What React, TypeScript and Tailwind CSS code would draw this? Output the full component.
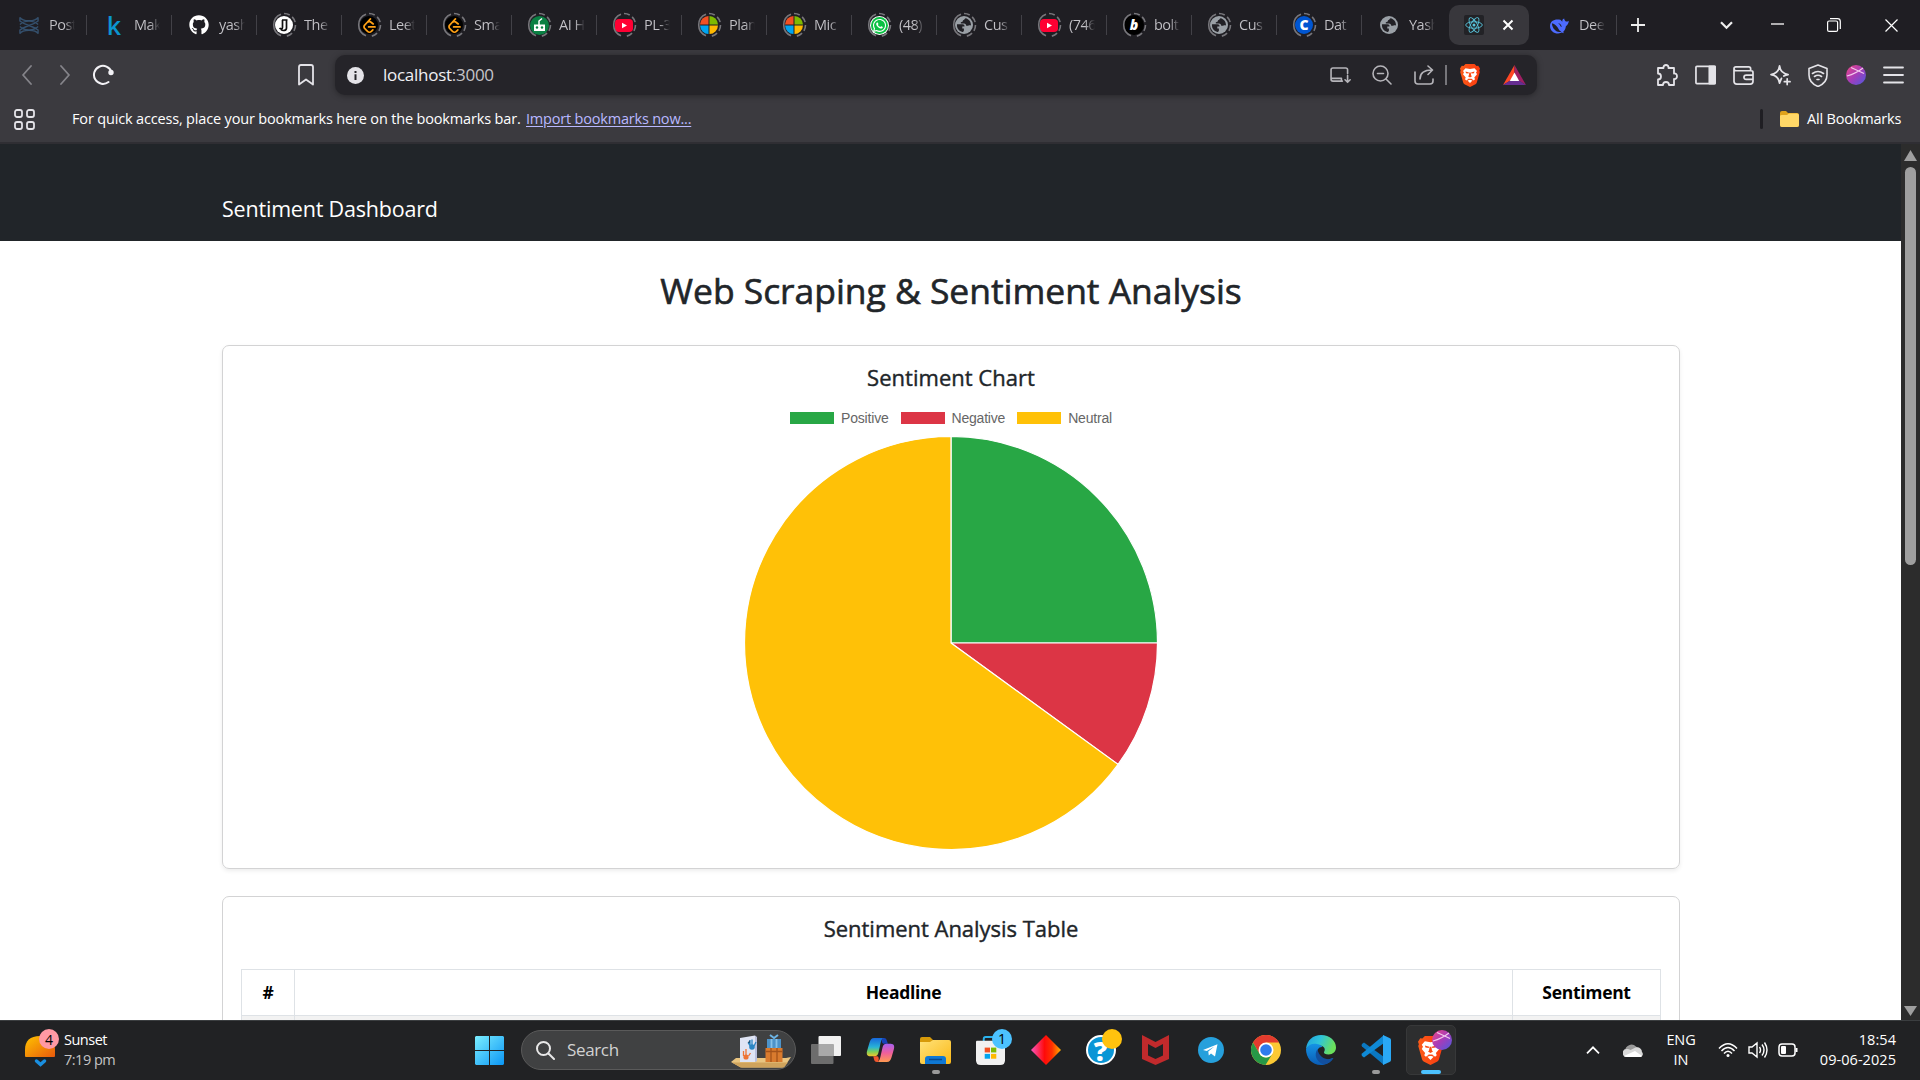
import React, { ReactNode } from "react";
import { FaGithub, FaWhatsapp, FaReact } from "react-icons/fa";
import { SiLeetcode } from "react-icons/si";

type Fav = { icon: ReactNode; label: string; ring?: boolean; noSep?: boolean };

const YouTube = () => (
  <svg width="18" height="13" viewBox="0 0 18 14" preserveAspectRatio="none"><rect width="18" height="14" rx="4" fill="#ff0033" /><path d="M7 4l5 3-5 3z" fill="#fff" /></svg>
);
const Microsoft = () => (
  <svg width="18" height="18" viewBox="0 0 18 18">
    <path d="M8.5 0A9 9 0 0 0 0 8.5h8.5z" fill="#f25022" /><path d="M9.5 0A9 9 0 0 1 18 8.5H9.5z" fill="#7fba00" />
    <path d="M0 9.5A9 9 0 0 0 8.5 18V9.5z" fill="#00a4ef" /><path d="M18 9.5A9 9 0 0 1 9.500 18V9.5z" fill="#ffb900" />
  </svg>
);
const Globe = () => (
  <svg width="18" height="18" viewBox="0 0 18 18">
    <circle cx="9" cy="9" r="9" fill="#9aa0a6" />
    <path d="M2 8.300h5.500c1.600 0 2 .9 2 2.200H7.300v2h1.600v2.200c-.8 1-.6 1.500-1.400 1.300C4 15.300 1.500 12 2 8.300z" fill="#222126" />
    <path d="M10.500 2.200C9.500 3 9.300 4 8 4.200c0 1.500-1 1.800-2.200 2v1.300H9c1.500 0 2.200 1 2.200 2.300h2c.8-.6 1.800-.5 2.800-.3.200-3.500-2-6.700-5.500-7.300z" fill="#222126" />
  </svg>
);
const Postfix = () => (
  <svg width="20" height="19" viewBox="0 0 22 20" fill="none" stroke="#34506d" strokeWidth="1.5">
    <path d="M1 1c3 5 17 5 20 0M1 19c3-5 17-5 20 0M1 1v4c6 5 14 5 20 10v4M21 1v4C15 10 7 10 1 15v4M1 9c5-5 15-5 20 0M1 11c5 5 15 5 20 0" />
  </svg>
);
const Leet = () => (
  <div className="flex size-[18px] items-center justify-center rounded-full bg-black"><SiLeetcode size={15} color="#ffa116" /></div>
);
const JJ = () => (
  <svg width="18" height="18" viewBox="0 0 18 18"><circle cx="9" cy="9" r="9" fill="#fff" /><path d="M7.500 4v7.500c0 1.500-2 1.800-3 .5M11.500 4v8c0 3-4 3-5.500 1.500M7 4h5.500" stroke="#111" strokeWidth="1.700" fill="none" /></svg>
);
const Robot = () => (
  <svg width="19" height="19" viewBox="0 0 19 19"><circle cx="9.500" cy="9.500" r="9.500" fill="#0a8043" /><path d="M4 8.500h11v6.500H4z" fill="#fff" /><path d="M9 9V5l3-2.500" fill="none" stroke="#fff" strokeWidth="1.500" /><circle cx="7" cy="11.500" r="1.200" fill="#0a8043" /><circle cx="12" cy="11.500" r="1.200" fill="#0a8043" /></svg>
);
const Whats = () => (
  <div className="flex size-[19px] items-center justify-center rounded-full bg-white"><div className="flex size-[17px] items-center justify-center rounded-full bg-[#0ac143]"><FaWhatsapp size={15} color="#fff" /></div></div>
);
const DeepSeek = () => (
  <svg width="20" height="17" viewBox="0 0 21 18">
    <path d="M12 3C7 1.500 1 3.500 1 9.500c0 5 4 8 8.500 8 2 0 3-.7 4-1l2 .7-.5-1.500c1.500-1.500 2.500-3.500 2.800-6 1.700-1 3-3 3-5.700-1 .8-2 1-3 .8-.8-1-1.800-1.500-1.800-3.300-2 .5-2 2-2 3.500z" fill="#4d6bfe" />
    <path d="M3 6.500c3 .5 6 3.500 7.500 7 .5 1 1.500 1.500 2.500 2-3 1-5 0-7-2C4.500 12 3 9.500 3 6.500zM9.500 6.500c2 0 3.500 1.500 4 4l-1.500-.8c0-1-1-2.200-2.500-3.200z" fill="#1f1e23" />
  </svg>
);

const tabs: Fav[] = [
  { icon: <Postfix />, label: "Postf" },
  { icon: <span className="font-['Open_Sans'] text-[25px] leading-none font-semibold text-[#0b95cf]">k</span>, label: "Mak" },
  { icon: <FaGithub size={20} color="#fff" />, label: "yash" },
  { icon: <JJ />, label: "The", ring: true },
  { icon: <Leet />, label: "Leet", ring: true },
  { icon: <Leet />, label: "Sma", ring: true },
  { icon: <Robot />, label: "AI H", ring: true },
  { icon: <YouTube />, label: "PL-3", ring: true },
  { icon: <Microsoft />, label: "Plan", ring: true },
  { icon: <Microsoft />, label: "Mic", ring: true },
  { icon: <Whats />, label: "(48)", ring: true },
  { icon: <Globe />, label: "Cus", ring: true },
  { icon: <YouTube />, label: "(746", ring: true },
  { icon: <span className="flex size-[20px] items-center justify-center rounded-full bg-black text-[14px] leading-none font-extrabold text-white italic">b</span>, label: "bolt", ring: true },
  { icon: <Globe />, label: "Cus", ring: true },
  { icon: <span className="flex size-[18px] items-center justify-center rounded-full bg-[#0056d2] text-[14px] leading-none font-extrabold text-white">C</span>, label: "Dat", ring: true },
  { icon: <Globe />, label: "Yash", noSep: true },
];

function Tab({ t }: { t: Fav }) {
  return (
    <div className="flex h-[50px] w-[85px] shrink-0 items-center">
      <div className="relative ml-[14px] flex size-[26px] shrink-0 items-center justify-center">
        {t.ring && (
          <svg className="absolute inset-0" width="26" height="26" viewBox="0 0 26 26" fill="none" stroke="#77767b" strokeWidth="1.600">
            <path d="M10 23.700A11.500 11.500 0 0 1 10 2.300" /><path d="M13 1.500A11.500 11.500 0 0 1 24.500 13A11.500 11.500 0 0 1 13 24.500" strokeDasharray="6 3" />
          </svg>
        )}
        {t.icon}
      </div>
      <div className="ml-[7px] w-[26px] shrink-0 overflow-hidden bg-gradient-to-r from-[#c4c3c8] from-60% to-[#c4c3c800] bg-clip-text text-[14.500px] leading-[22px] tracking-[-0.500px] whitespace-nowrap text-transparent">{t.label}</div>
      {!t.noSep && <div className="ml-[11px] h-5 w-px bg-[#424147]" />}
    </div>
  );
}

function Cell({ className, children }: { className: string; children: ReactNode }) {
  return <div className={"flex h-full shrink-0 items-center justify-center " + className}>{children}</div>;
}

const BraveLion = ({ w, h, id }: { w: number; h: number; id: string }) => (
  <svg width={w} height={h} viewBox="0 0 20 23" preserveAspectRatio="none">
    <defs><linearGradient id={id}><stop stopColor="#fb5b18" /><stop offset="1" stopColor="#fb3a10" /></linearGradient></defs>
    <path d="M5.500 0h9l2 2 1.700-.200L20 4.500l-.700 2 .500 1.500-3 10.500q-.300 1-1.300 1.800L10 23l-5.500-2.700q-1-.800-1.300-1.800L.2 8l.5-1.500-.7-2 1.800-2.700 1.700.2z" fill={"url(#" + id + ")"} />
    <path d="M5.500 4.200l4.500.800 4.500-.800L17 7l-1 1.500 1 1.800-2.700 3.200.700 1.700-1.300 1.300-2-1.500H8.300l-2 1.500L5 15.200l.7-1.700L3 10.300l1-1.800L3 7zM7.500 16.500L10 15.700l2.500.8L10 19z" fill="#fff" />
    <path d="M5.500 7.500l3.500 1-.500 1-2.500-.300zM14.500 7.500l-3.500 1 .5 1 2.500-.3zM9.300 8.500h1.400l.5 3 .8.800L10 13.500l-2-1.200.8-.8zM8 14.700h4L10 15.800z" fill="#fb4b14" />
  </svg>
);

const Planet = ({ size, id }: { size: number; id: string }) => (
  <svg width={size} height={size} viewBox="0 0 20 20">
    <defs><linearGradient id={id} x1="0" y1="0" x2="1" y2="1"><stop offset=".1" stopColor="#e0458f" /><stop offset=".5" stopColor="#a63cb9" /><stop offset="1" stopColor="#4a5be0" /></linearGradient></defs>
    <circle cx="10" cy="10" r="10" fill={"url(#" + id + ")"} /><path d="M1 11Q10 8.500 17 3M5 2.500l13 6" stroke="#f3c9ee" strokeWidth="1.100" fill="none" />
  </svg>
);

function TabStrip() {
  return (
    <div className="flex h-[50px] items-center bg-[#1f1e23] pl-[2px]">
      {tabs.map((t, i) => <Tab key={i} t={t} />)}
      <div className="ml-[2px] flex h-10 w-[80px] shrink-0 items-center rounded-[10px] bg-[#38373c]">
        <div className="ml-[15px] flex size-5 items-center justify-center rounded-[2px] bg-[#222226]">
          <svg width="18" height="18" viewBox="-10 -10 20 20" fill="none" stroke="#58c4dc" strokeWidth="1"><ellipse rx="9.200" ry="3.600" /><ellipse rx="9.200" ry="3.600" transform="rotate(60)" /><ellipse rx="9.200" ry="3.600" transform="rotate(120)" /><circle r="1.700" fill="#58c4dc" stroke="none" /></svg>
        </div>
        <svg className="ml-[18px]" width="12" height="12" viewBox="0 0 12 12" stroke="#fff" strokeWidth="2"><path d="M1.500 1.500l9 9M10.500 1.500l-9 9" /></svg>
      </div>
      <div className="ml-[3px]"><Tab t={{ icon: <DeepSeek />, label: "Dee" }} /></div>
      <svg className="ml-[14px]" width="14" height="14" viewBox="0 0 14 14" stroke="#eee" strokeWidth="1.800"><path d="M7 0v14M0 7h14" /></svg>
      <svg className="ml-[75px]" width="13" height="9" viewBox="0 0 13 9" fill="none" stroke="#eee" strokeWidth="2.200"><path d="M1 1.200l5.500 5.600L12 1.200" /></svg>
      <svg className="mb-[2px] ml-[38px]" width="13" height="2"><path d="M0 1h13" stroke="#fff" strokeWidth="1.300" /></svg>
      <svg className="ml-[43px]" width="14" height="14" viewBox="0 0 14 14" fill="none" stroke="#fff" strokeWidth="1.200"><rect x=".6" y="3" width="10" height="10.400" rx="1.500" /><path d="M3 .7h7.500q2.800 0 2.800 2.800V11" /></svg>
      <svg className="ml-[44px]" width="13" height="13" viewBox="0 0 13 13" stroke="#fff" strokeWidth="1.200"><path d="M.5.5l12 12M12.500.5l-12 12" /></svg>
    </div>
  );
}

const line = { fill: "none", stroke: "#e4e3e8", strokeWidth: 1.8, strokeLinecap: "round" as const, strokeLinejoin: "round" as const };

function Toolbar() {
  return (
    <div className="flex h-[50px] items-center">
      <Cell className="ml-[8px] w-[37px]"><svg width="12" height="20" viewBox="0 0 12 20" {...line} stroke="#85848a"><path d="M10 1L2 10l8 9" /></svg></Cell>
      <Cell className="w-[39px]"><svg width="12" height="20" viewBox="0 0 12 20" {...line} stroke="#85848a"><path d="M2 1l8 9-8 9" /></svg></Cell>
      <Cell className="w-[38px]"><svg width="22" height="22" viewBox="0 0 22 22" {...line} stroke="#f2f1f5" strokeWidth="2"><path d="M16.500 18A9 9 0 1 1 19.500 8" /><circle cx="19" cy="8.500" r="1.700" fill="#f2f1f5" /></svg></Cell>
      <Cell className="ml-[165px] w-[38px]"><svg width="16" height="22" viewBox="0 0 16 22" {...line}><path d="M1 3q0-2 2-2h10q2 0 2 2v17.500L8 15.500 1 20.500z" /></svg></Cell>
      <div className="ml-[10px] flex h-10 w-[1202px] items-center rounded-[10px] bg-[#252429] shadow-[0_1px_6px_rgba(0,0,0,0.35)]">
        <svg className="ml-[12px]" width="17" height="17" viewBox="0 0 17 17"><circle cx="8.500" cy="8.500" r="8.500" fill="#e4e3e8" /><path d="M7.500 4h2v2h-2zM7.500 7.200h2V13h-2z" fill="#252429" /></svg>
        <span className="ml-[19px] text-[17px] tracking-[-0.270px] text-[#f0f0f4]">localhost<span className="text-[#c6c5ca]">:3000</span></span>
        <div className="ml-auto flex h-full items-center pr-[2px]">
          <Cell className="w-[42px] pl-[2px]"><svg width="21" height="17" viewBox="0 0 22 18" {...line} stroke="#b5b4b9" strokeWidth="1.700"><path d="M18.500 7V3q0-2-2-2H3Q1 1 1 3v10q0 2 2 2h10M1 12h11v3M18.500 9v7M15.800 13.500l2.700 2.700 2.700-2.700" /></svg></Cell>
          <Cell className="w-[43px]"><svg width="20" height="20" viewBox="0 0 20 20" {...line} stroke="#b5b4b9" strokeWidth="1.600"><circle cx="8.500" cy="8.500" r="7.500" /><path d="M14 14l5 5M5.500 8.500h6" /></svg></Cell>
          <Cell className="w-[42px]"><svg width="20" height="20" viewBox="0 0 20 20" {...line} stroke="#b5b4b9" strokeWidth="1.600"><path d="M1 7v9q0 3 3 3h12q3 0 3-3v-2M6 14q0-9 12-9M14 1l4.500 4L14 9.500" /></svg></Cell>
          <div className="h-5 w-[2px] bg-[#77767b]" />
          <Cell className="w-[46px]"><BraveLion w={20} h={23} id="bl1" /></Cell>
          <Cell className="w-[42px]"><svg width="23" height="20" viewBox="0 0 23 20"><path d="M11.500 0L0 20l11.500-7z" fill="#ff4724" /><path d="M11.500 0L23 20 11.500 13z" fill="#9e1f63" /><path d="M0 20h23l-7-4.500H7z" fill="#662d91" /><path d="M11.500 7.500l4.700 8.500h-9.400z" fill="#fff" /></svg></Cell>
        </div>
      </div>
      <div className="ml-[112px] flex h-full items-center">
        <Cell className="w-[37px]"><svg width="21" height="22" viewBox="0 0 21 22" {...line}><path d="M1 4h5.500C6 0 12 0 11.500 4H17v5.500c4-.5 4 6 0 5.500V21h-5c0-4-6-4-6 0H1v-5.500c4 0 4-6 0-6z" /></svg></Cell>
        <Cell className="w-[38px]"><svg width="21" height="20" viewBox="0 0 22 20" {...line}><rect x="1" y="1" width="20" height="18" rx="1" /><path d="M15 1h6v18h-6z" fill="#e4e3e8" /></svg></Cell>
        <Cell className="w-[38px]"><svg width="21" height="19" viewBox="0 0 22 20" {...line}><path d="M1 3v13q0 3 3 3h14q3 0 3-3V7q0-2-2-2H3Q1 5 1 3q0-2 2-2h13.500q2 0 2 2v2M21 9.500h-7q-2.500 0-2.500 2.300T14 14h7" /></svg></Cell>
        <Cell className="w-[37px]"><svg width="21" height="21" viewBox="0 0 22 22" {...line}><path d="M12 14q-1 2.500-2 5-1-8-9-9 8-1 9-9 1 8 9 9-2.500.3-4.500 1.500M18 14.500v6M15 17.500h6" /></svg></Cell>
        <Cell className="w-[38px]"><svg width="20" height="23" viewBox="0 0 20 23" {...line} strokeWidth="1.600"><path d="M10 1l9 3.500V11c0 6-4 9.500-9 11.500C5 20.500 1 17 1 11V4.500zM4.500 9.500q5.500-4 11 0M6.500 12.500q3.500-2.500 7 0M9 15.500h2" /></svg></Cell>
        <Cell className="w-[37px]"><Planet size={20} id="av" /></Cell>
        <Cell className="w-[38px]"><svg width="21" height="18" viewBox="0 0 21 18" {...line}><path d="M1 1.500h19M1 9h19M1 16.500h19" /></svg></Cell>
      </div>
    </div>
  );
}

function Bookmarks() {
  return (
    <div className="flex h-[42px] items-center pb-[4px] text-[15px] text-white">
      <svg className="ml-[14px] shrink-0" width="21" height="21" viewBox="0 0 21 21" {...line}><rect x="1" y="1" width="7" height="7" rx="2" /><rect x="13" y="1" width="7" height="7" rx="2" /><rect x="1" y="13" width="7" height="7" rx="2" /><rect x="13" y="13" width="7" height="7" rx="2" /></svg>
      <span className="ml-[37px] w-[454px] text-[14.500px] tracking-[-0.165px] whitespace-nowrap">For quick access, place your bookmarks here on the bookmarks bar.</span>
      <span className="text-[14.500px] tracking-[-0.200px] whitespace-nowrap text-[#b9b8ff] underline underline-offset-2">Import bookmarks now...</span>
      <div className="ml-auto h-5 w-[3px] rounded bg-[#1f1e23]" />
      <svg className="ml-[17px]" width="19" height="16" viewBox="0 0 19 16"><path d="M0 2q0-2 2-2h4l2 2h9q2 0 2 2v10q0 2-2 2H2q-2 0-2-2z" fill="#e0a21b" /><path d="M0 5q0-1 2-1h5l2-1.500h8q2 0 2 2V14q0 2-2 2H2q-2 0-2-2z" fill="#ffd767" /></svg>
      <span className="ml-[8px] w-[113px] text-[14.500px] tracking-[-0.180px] whitespace-nowrap">All Bookmarks</span>
    </div>
  );
}

function Legend({ color, label }: { color: string; label: string }) {
  return (
    <div className="flex items-center gap-[7px]">
      <span className="h-[12px] w-[44px]" style={{ backgroundColor: color }} />
      <span className="font-['Liberation_Sans'] text-[14px] leading-4 tracking-[-0.200px] text-[#666]">{label}</span>
    </div>
  );
}

function Page() {
  return (
    <div className="flex h-[876px] overflow-hidden">
      <main className="h-full w-[1901px] shrink-0 overflow-hidden bg-white text-[#212529]">
        <nav className="h-[97px] bg-[#212529] pt-[48px] pl-[222px]"><span className="text-[21.500px] leading-[34px] tracking-[-0.200px] text-white">Sentiment Dashboard</span></nav>
        <div className="ml-[222px] w-[1458px]">
          <h1 className="pt-[28px] text-center text-[35.500px] leading-[43px] font-medium tracking-[-0.050px] [-webkit-text-stroke:0.6px_#212529]">Web Scraping &amp; Sentiment Analysis</h1>
          <section className="mt-[33px] flex h-[524px] flex-col items-center rounded-[7px] border border-[#d3d3d4] shadow-[0_2px_4px_rgba(0,0,0,0.075)]">
            <h2 className="mt-[18px] text-[22px] leading-[27px] font-medium tracking-[0.020px] [-webkit-text-stroke:0.4px_#212529]">Sentiment Chart</h2>
            <div className="mt-[19px] flex h-4 items-center gap-[12px]">
              <Legend color="#28a745" label="Positive" /><Legend color="#dc3545" label="Negative" /><Legend color="#ffc107" label="Neutral" />
            </div>
            <svg className="mt-[10px]" width="414" height="414" viewBox="-207 -207 414 414" stroke="#fff" strokeWidth="1.200" strokeLinejoin="bevel">
              <path d="M0 0V-206.500A206.500 206.500 0 0 1 206.500 0z" fill="#28a745" />
              <path d="M0 0H206.500A206.500 206.500 0 0 1 167.060 121.380z" fill="#dc3545" />
              <path d="M0 0L167.060 121.380A206.500 206.500 0 1 1 0-206.500z" fill="#ffc107" />
            </svg>
          </section>
          <section className="mt-[27px] h-[200px] rounded-[7px] border border-[#d3d3d4] px-[18px] pt-[18px]">
            <h2 className="text-center text-[22px] leading-[27px] font-medium tracking-[-0.030px] [-webkit-text-stroke:0.4px_#212529]">Sentiment Analysis Table</h2>
            <div className="mt-[27px] grid grid-cols-[52px_1fr_147px] gap-px bg-[#dee2e6] p-px text-center text-[17.500px] font-bold tracking-[-0.300px] text-black">
              <div className="bg-white leading-[45px]">#</div><div className="bg-white leading-[45px]">Headline</div><div className="bg-white leading-[45px]">Sentiment</div>
              <div className="h-[45px] bg-[#f2f2f2]" /><div className="bg-[#f2f2f2]" /><div className="bg-[#f2f2f2]" />
            </div>
          </section>
        </div>
      </main>
      <aside className="flex w-[19px] flex-col items-center bg-[#2c2c2c]">
        <svg className="mt-[6px]" width="13" height="11"><path d="M6.500 0L13 11H0z" fill="#9f9f9f" /></svg>
        <div className="mt-[6px] h-[398px] w-[11px] rounded-full bg-[#9f9f9f]" />
        <svg className="mt-auto mb-[4px]" width="13" height="10"><path d="M6.500 10L13 0H0z" fill="#9f9f9f" /></svg>
      </aside>
    </div>
  );
}

const Copilot = () => (
  <svg width="29" height="26" viewBox="0 0 29 27" fill="none">
    <defs>
      <linearGradient id="ca" x1="0" y1="0" x2="0" y2="1"><stop stopColor="#1767dd" /><stop offset=".5" stopColor="#28b3d7" /><stop offset=".75" stopColor="#7bd05a" /><stop offset="1" stopColor="#f5c52b" /></linearGradient>
      <linearGradient id="cb" x1="0" y1="0" x2="0" y2="1"><stop stopColor="#a760f0" /><stop offset=".5" stopColor="#ef5f9c" /><stop offset="1" stopColor="#ff9a50" /></linearGradient>
    </defs>
    <path d="M17 1h1c2.500 0 3 2 3.500 4l.7 2h-4C16 7 15 4 17 1z" fill="#1742b8" />
    <path d="M8 1h10c-2.500 0-3.300 5-4 8l-1.800 8c-.7 2-1.700 3-4 3H4c-4 0-4.200-3-3.300-6L3 6C4 3 5 1 8 1z" fill="url(#ca)" />
    <path d="M21 26H11c2.500 0 3.300-5 4-8l1.800-8c.7-2 1.700-3 4-3H25c4 0 4.200 3 3.300 6L26 21c-1 3-2 5-5 5z" fill="url(#cb)" />
    <path d="M12 26h-1c-2.500 0-3-2-3.500-4L7 20h3.500c2 0 3 2 1.500 6z" fill="#f0562e" />
  </svg>
);
const Explorer = () => (
  <svg width="31" height="27" viewBox="0 0 31 27"><defs><linearGradient id="fo" x1="0" y1="0" x2="1" y2="1"><stop stopColor="#ffe27a" /><stop offset="1" stopColor="#fbb917" /></linearGradient></defs><path d="M0 2q0-2 2-2h8l4 4v4H0z" fill="#d79a0a" /><path d="M0 5h10l3-2h16q2 0 2 2v20q0 2-2 2H2q-2 0-2-2z" fill="url(#fo)" /><path d="M5 27v-5q0-3 3-3h15q3 0 3 3v5z" fill="#0f78d4" /><path d="M9 22.500h13" stroke="#08498f" strokeWidth="1.500" /></svg>
);
const Store = () => (
  <div className="relative">
    <svg width="29" height="29" viewBox="0 0 30 30"><path d="M8 8V3q0-2 2-2h9q3 0 3 2v5" fill="none" stroke="#2bb3ee" strokeWidth="2" /><path d="M0 6q0-1 1-1h28q1 0 1 1v19q0 5-5 5H5q-5 0-5-5z" fill="#f1f1f1" /><path d="M9 12h5.500v5H9z" fill="#f25022" /><path d="M15.500 12H21v5h-5.500z" fill="#7fba00" /><path d="M9 18.500h5.500v5H9z" fill="#00a4ef" /><path d="M15.500 18.500H21v5h-5.500z" fill="#ffb900" /></svg>
    <span className="absolute -top-[7px] left-[16px] flex size-5 items-center justify-center rounded-full bg-[#4cc2ff] text-[14px] text-black">1</span>
  </div>
);
const Diamond = () => (
  <svg width="30" height="30" viewBox="0 0 30 30"><defs><linearGradient id="di"><stop stopColor="#f857c0" /><stop offset=".45" stopColor="#ff0a0a" /><stop offset=".7" stopColor="#ff3000" /><stop offset="1" stopColor="#ffb000" /></linearGradient></defs><path d="M15 0l15 15-15 15L0 15z" fill="url(#di)" /></svg>
);
const Help = () => (
  <div className="relative flex size-[30px] items-center justify-center rounded-full border-2 border-white bg-[#0a96d6] text-[27px] leading-none font-extrabold text-white">?<span className="absolute -top-[8px] left-[14px] size-5 rounded-full bg-[#ffc20e]" /></div>
);
const McAfee = () => (
  <svg width="27" height="30" viewBox="0 0 27 30"><path d="M0 0l13.500 7L27 0v24l-13.500 6L0 24z" fill="#c12a2c" /><path d="M6 9l7.500 4L21 9v11.500L13.500 24 6 20.500z" fill="#212224" /></svg>
);
const Telegram = () => (
  <svg width="26" height="26" viewBox="0 0 26 26"><circle cx="13" cy="13" r="13" fill="#26a0dc" /><path d="M5 13l14.500-5.700L17 19.500l-4-3-2.200 2-.5-4 6-5-7.500 4.500z" fill="#fff" /></svg>
);
const Chrome = () => (
  <svg width="30" height="30" viewBox="0 0 30 30"><circle cx="15" cy="15" r="15" fill="#fcc934" /><path d="M2 7.500A15 15 0 0 1 28 7.500H15L8.500 18.700z" fill="#e33b2e" /><path d="M2 7.500A15 15 0 0 0 14.500 30L21.500 18.700A7.500 7.500 0 0 1 8.500 18.700z" fill="#279847" /><circle cx="15" cy="15" r="7.500" fill="#fff" /><circle cx="15" cy="15" r="5.800" fill="#2f7bee" /></svg>
);
const Edge = () => (
  <svg width="30" height="30" viewBox="0 0 30 30"><defs><linearGradient id="ea" y1="0" x2="1" y2=".3"><stop stopColor="#1f9fe0" /><stop offset=".5" stopColor="#2fc4d9" /><stop offset="1" stopColor="#6be05c" /></linearGradient><linearGradient id="eb" x2="0" y2="1"><stop stopColor="#1593e5" /><stop offset="1" stopColor="#0a5cb5" /></linearGradient></defs>
    <path d="M0 14C1 5 7 0 15 0c9 0 15 6 15 12.500 0 4-3 7-7.500 7-3 0-5-1-4.500-2.500 2-3 0-6-4-6.500C8 9.500 2 11 0 14z" fill="url(#ea)" /><path d="M0 14c2-4.500 7-6 11-5 3 .5 5 2 5.500 3-4-.5-5.500 3-5 6 .8 5 6 7.500 11 6.500 2-.5 3.500-1.500 4.800-1.500C24.500 27.500 20 30 15 30 6 30 0 23 0 14z" fill="url(#eb)" /><path d="M11.500 14c-4 6-1 13 6 15.500 4-.5 8-3 10-6.500-6 3.500-15-.5-16-9z" fill="#124f9e" /></svg>
);
const VSCode = () => (
  <svg width="30" height="30" viewBox="0 0 30 30"><path d="M1 9l2-1.500L23 22v8L1 11.500Q0 10.200 1 9z" fill="#0b78c1" /><path d="M1 21l2 1.500L23 8V0L1 18.500Q0 19.800 1 21z" fill="#0f8ad6" /><path d="M22 0l6.500 3Q30 3.700 30 5v20q0 1.300-1.500 2L22 30z" fill="#2aa8f5" /></svg>
);
const BraveApp = () => (
  <div className="relative flex size-[50px] items-center justify-center rounded-[5px] border border-[#373839] bg-[#2d2e2f]"><BraveLion w={25} h={29} id="bl2" /><span className="absolute top-[4px] left-[25px]"><Planet size={20} id="av2" /></span></div>
);

const apps: { el: ReactNode; mark?: "dot" | "bar" }[] = [
  { el: <svg width="30" height="28" viewBox="0 0 30 28"><rect x="7.500" y="0" width="22.500" height="20" rx="1" fill="#f1f1f1" /><rect x="0" y="8" width="22.500" height="20" rx="1" fill="#6d6d6d" /><path d="M7.500 8h15v12h-15z" fill="#a9a9a9" /></svg> },
  { el: <Copilot /> }, { el: <Explorer />, mark: "dot" }, { el: <Store /> }, { el: <Diamond /> }, { el: <Help /> }, { el: <McAfee /> },
  { el: <Telegram /> }, { el: <Chrome /> }, { el: <Edge /> }, { el: <VSCode />, mark: "dot" }, { el: <BraveApp />, mark: "bar" },
];

function Taskbar() {
  return (
    <footer className="flex h-[60px] items-center border-t border-[#3b3e40] bg-[#212224] pb-px text-white">
      <div className="relative ml-[25px] size-[36px] shrink-0">
        <svg width="32" height="38" viewBox="0 0 32 38"><defs><linearGradient id="su" x2="1" y2="1"><stop stopColor="#ffc400" /><stop offset="1" stopColor="#e8590c" /></linearGradient></defs><path d="M0 24V18q0-14 15-14t15 14v6q0 1-1 1H1q-1 0-1-1z" fill="url(#su)" /><path d="M11.500 29l4 3.500 4-3.500" fill="none" stroke="#1a8fe0" strokeWidth="3.500" strokeLinecap="round" /></svg>
        <span className="absolute -top-[3px] left-[14px] flex size-5 items-center justify-center rounded-full bg-[#ff99a4] text-[14px] text-black">4</span>
      </div>
      <div className="ml-[3px] w-[410px] text-[14.500px] leading-5 tracking-[-0.500px]"><div>Sunset</div><div className="text-[#c4c4c4]">7:19 pm</div></div>
      <svg className="ml-px" width="29" height="29" viewBox="0 0 29 29"><defs><linearGradient id="wi" x2="1" y2="1"><stop stopColor="#7beeff" /><stop offset="1" stopColor="#0b96f5" /></linearGradient></defs><path d="M1 0h13v14H0V1zM15 0h13l1 1v13H15zM0 15h14v14H1l-1-1zM15 15h14v13l-1 1H15z" fill="url(#wi)" /></svg>
      <div className="ml-[17px] flex h-10 w-[275px] items-center rounded-full border border-[#5a5a5a] bg-[#404142]">
        <svg className="ml-[14px]" width="19" height="19" viewBox="0 0 19 19" fill="none" stroke="#e8e8e8" strokeWidth="2"><circle cx="7.500" cy="7.500" r="6.500" /><path d="M12.500 12.500l5.500 5.500" strokeLinecap="round" /></svg>
        <span className="ml-[12px] text-[17px] tracking-[-0.350px] text-[#d2d2d2]">Search</span>
        <svg className="mt-[2px] mr-[4px] ml-auto" width="60" height="34" viewBox="0 0 60 34">
          <path d="M0 28l5-4h50l5-1-6 9q-1 1.500-3 1.500H11q-2 0-3-1z" fill="#e9c581" /><path d="M1 28.500h56l-3 3.500q-1 1.500-3 1.500H11q-2 0-3-1z" fill="#cfa35c" /><path d="M9 4l15-2.500V28H9z" fill="#dfe4f4" /><path d="M24 1.500l2 1.500v24l-2 1z" fill="#b9bfdc" />
          <path d="M17 8.500l2 3V6M21 11V5.500M23 12l2-4" stroke="#2c86c4" strokeWidth="1.300" /><circle cx="21" cy="13" r="2.800" fill="#2c86c4" /><path d="M12.500 17v5M15 21v-6M17.500 22l2-3" stroke="#ee7335" strokeWidth="1.300" /><circle cx="15" cy="23" r="2.600" fill="#ee7335" />
          <path d="M36 5h14v10H36z" fill="#4d93c9" /><path d="M40.500 5v10M45.500 5v10" stroke="#86c1e8" strokeWidth="1.800" /><path d="M39 1l4 3 4-3" stroke="#6cb5e6" strokeWidth="2" fill="none" /><path d="M34.500 14h17v14h-17z" fill="#d97b2e" /><path d="M40 14v14M46 14v14M34.500 17.500h17" stroke="#a4531a" strokeWidth="1.300" />
        </svg>
      </div>
      <div className="ml-[2px] flex h-full">
        {apps.map((a, i) => (
          <div key={i} className="relative flex h-full w-[55px] items-center justify-center">
            {a.el}
            {a.mark === "dot" && <span className="absolute bottom-[5px] h-1 w-2 rounded-full bg-[#9a9a9a]" />}
            {a.mark === "bar" && <span className="absolute bottom-[5px] h-1 w-5 rounded-full bg-[#4cc2ff]" />}
          </div>
        ))}
      </div>
      <div className="ml-auto flex items-center pr-[24px] text-[15px] leading-5">
        <svg width="14" height="8" viewBox="0 0 14 8" fill="none" stroke="#fff" strokeWidth="1.700"><path d="M1 7.300l6-6 6 6" /></svg>
        <svg className="ml-[23px]" width="20" height="13" viewBox="0 0 20 13"><path d="M2 7A6.500 6.500 0 0 1 13 2.500L19 7 9 10z" fill="#9a9a9a" /><path d="M4 13a4 4 0 0 1-.5-8q2-.5 4 1l5-2.500q5.500-1 6.500 4.500a3 3 0 0 1-1.500 5z" fill="#d9d9d9" /><path d="M1 12l11-5 7 5q-.5 1-2 1H4q-2 0-3-1z" fill="#fff" /></svg>
        <div className="ml-[22px] w-[32px] text-center text-[14.500px] tracking-[-0.100px]">ENG<br />IN</div>
        <svg className="ml-[21px]" width="20" height="16" viewBox="0 0 20 16" fill="none" stroke="#fff" strokeWidth="1.500"><path d="M1 6.500q9-9.500 18 0M3.500 9q6.500-7 13 0M6 11.500q4-4.500 8 0" /><circle cx="10" cy="13.500" r="1.500" fill="#fff" stroke="none" /></svg>
        <svg className="ml-[10px]" width="20" height="18" viewBox="0 0 20 18" fill="none" stroke="#fff" strokeWidth="1.400"><path d="M1 6h3l5-4v14l-5-4H1zM11.500 6q2 3 0 6M14 3.500q4 5.500 0 11M16.500 1.500q5 7.500 0 15" /></svg>
        <svg className="ml-[10px]" width="20" height="14" viewBox="0 0 20 14" fill="none" stroke="#fff" strokeWidth="1.500"><rect x="1" y="1" width="16" height="12" rx="3" /><path d="M18.500 5v4" strokeWidth="2" /><rect x="3" y="3" width="5" height="8" rx="1" fill="#fff" stroke="none" /></svg>
        <div className="ml-[20px] w-[78px] text-right text-[14.500px] tracking-[0.050px] whitespace-nowrap">18:54<br />09-06-2025</div>
      </div>
    </footer>
  );
}

export default function App() {
  return (
    <div className="flex h-[1080px] w-[1920px] flex-col overflow-hidden bg-[#3b3a3f] font-['Open_Sans','Noto_Sans',sans-serif]">
      <TabStrip />
      <Toolbar />
      <Bookmarks />
      <div className="h-[2px] bg-[#2f2e33]" />
      <Page />
      <Taskbar />
    </div>
  );
}
